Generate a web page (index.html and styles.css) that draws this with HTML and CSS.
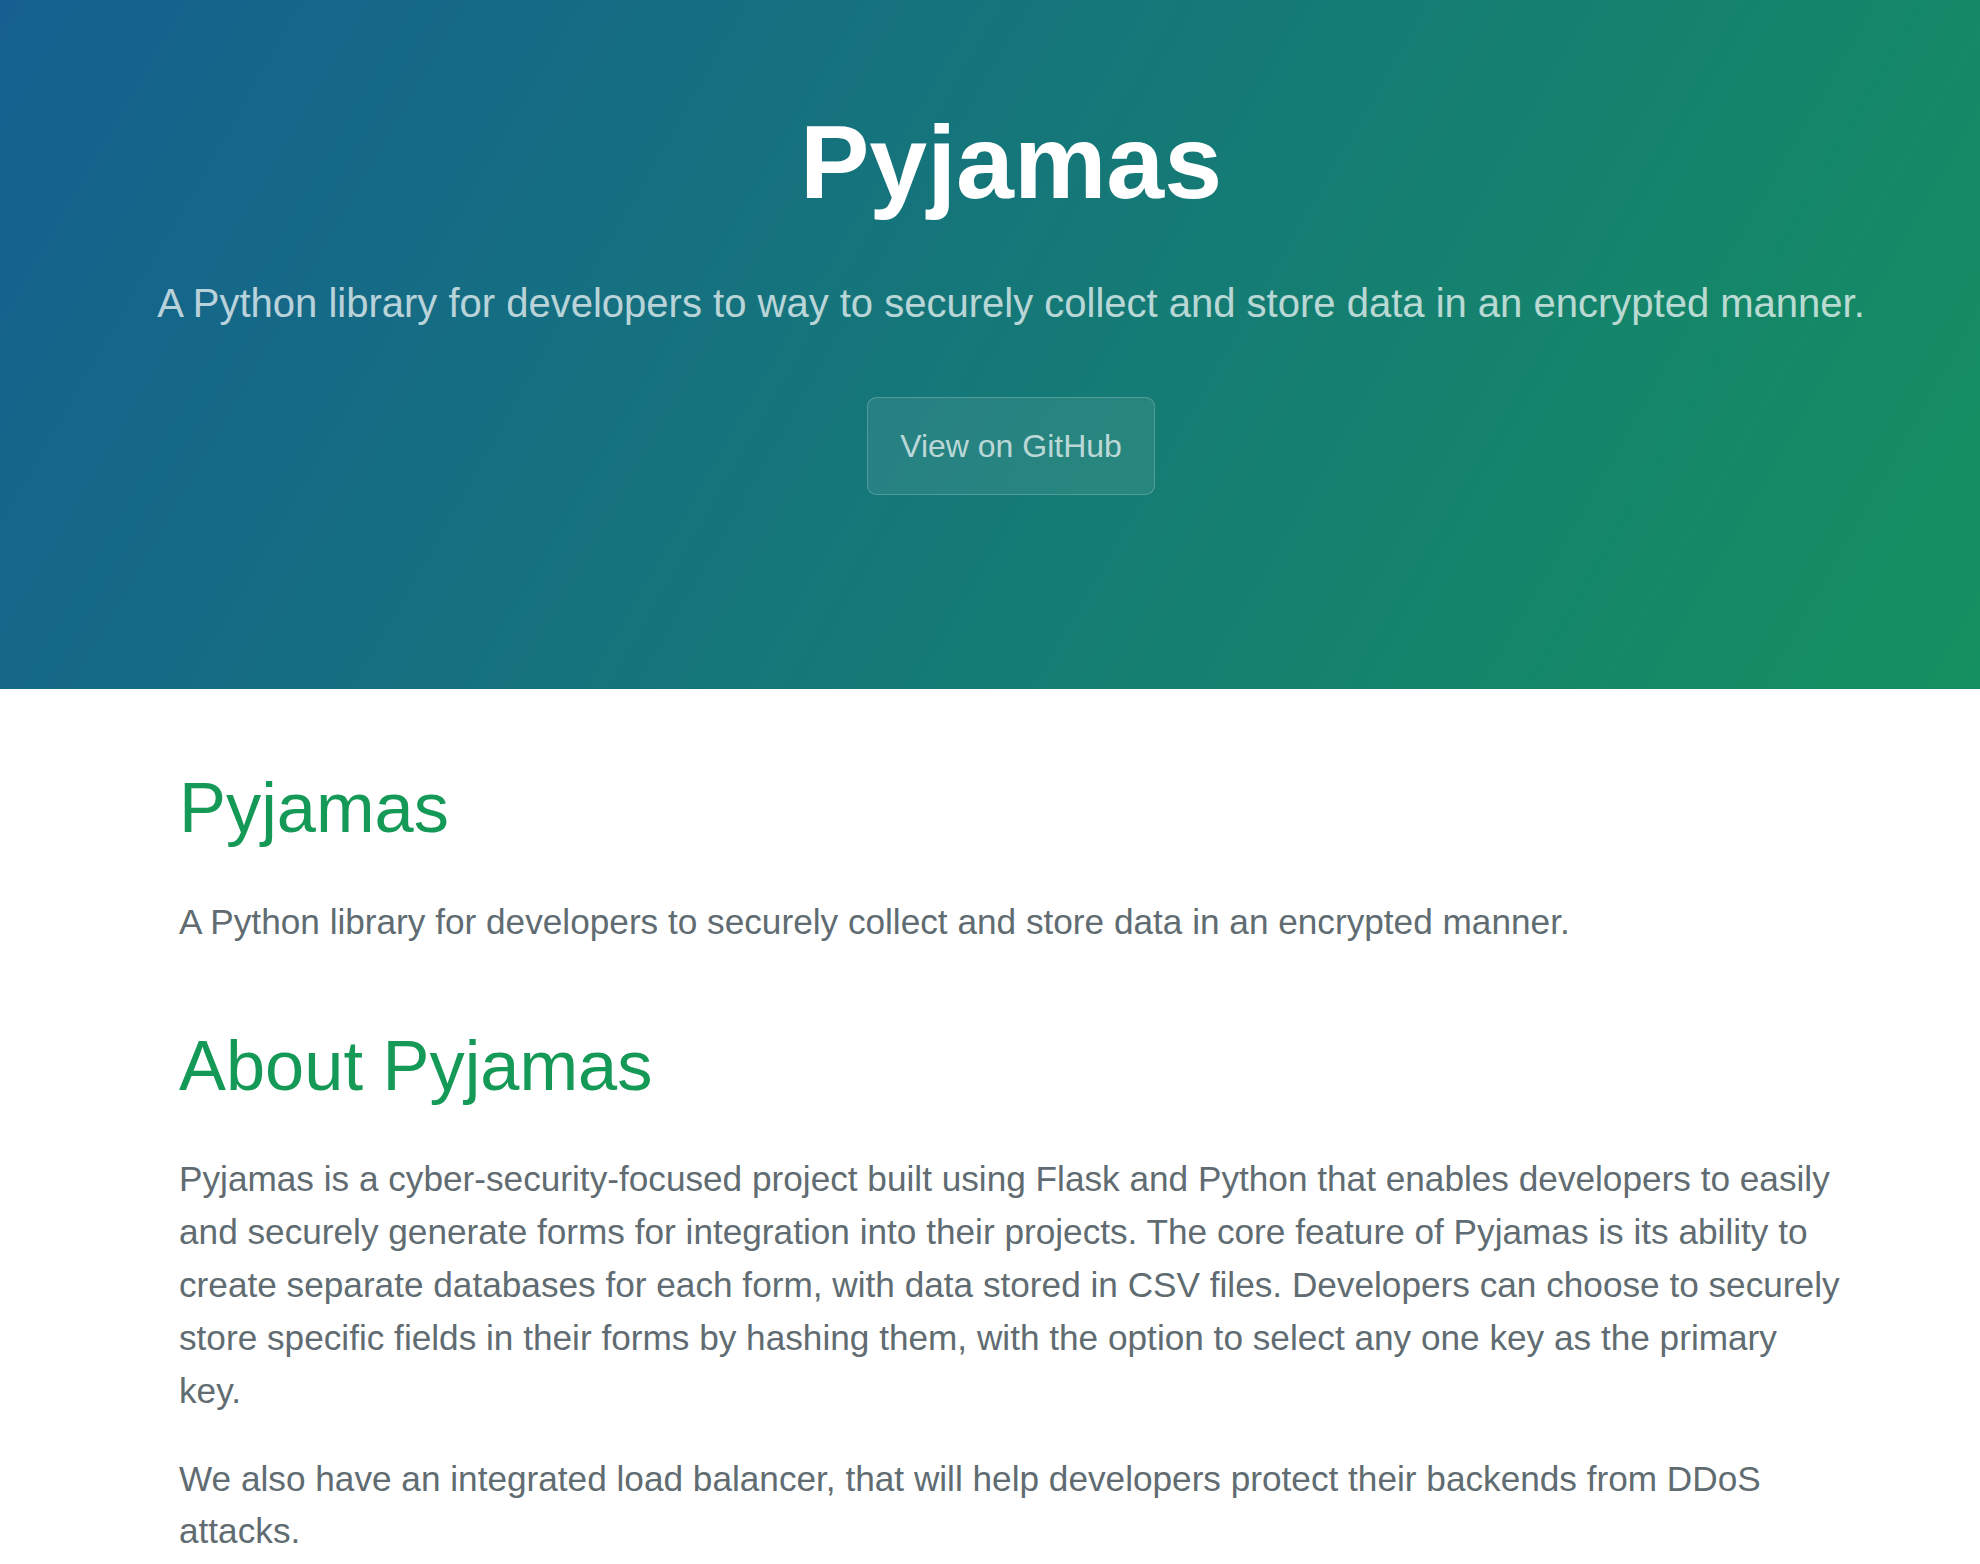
FILE: index.html
```html
<!DOCTYPE html>
<html lang="en">
<head>
<meta charset="utf-8">
<title>Pyjamas</title>
<link rel="stylesheet" href="styles.css">
</head>
<body>
<section class="page-header">
  <h1 class="project-name">Pyjamas</h1>
  <h2 class="project-tagline">A Python library for developers to way to securely collect and store data in an encrypted manner.</h2>
  <a class="btn" href="#">View on GitHub</a>
</section>
<section class="main-content">
  <h1 class="section-title">Pyjamas</h1>
  <p class="text">A Python library for developers to securely collect and store data in an encrypted manner.</p>
  <h1 class="section-title">About Pyjamas</h1>
  <p class="text">Pyjamas is a cyber-security-focused project built using Flask and Python that enables developers to easily and securely generate forms for integration into their projects. The core feature of Pyjamas is its ability to create separate databases for each form, with data stored in CSV files. Developers can choose to securely store specific fields in their forms by hashing them, with the option to select any one key as the primary key.</p>
  <p class="text">We also have an integrated load balancer, that will help developers protect their backends from DDoS attacks.</p>
</section>
</body>
</html>
```

FILE: styles.css
```css
html, body {
  margin: 0;
  padding: 0;
}

body {
  font-family: "Liberation Sans", Arial, Helvetica, sans-serif;
  font-size: 32px;
  line-height: 1.5;
  color: #606c71;
  background: #fff;
}

.page-header {
  box-sizing: border-box;
  height: 689px;
  padding: 84px 0 0 42px;
  color: #fff;
  text-align: center;
  background-color: #159957;
  background-image: linear-gradient(120deg, #155799 -18%, #159957 118%);
}

.project-name {
  margin: 0 0 3.2px;
  font-size: 104px;
  font-weight: bold;
  line-height: 1.5;
}

.project-tagline {
  margin: 33.2px 0 64px;
  font-size: 40px;
  font-weight: normal;
  line-height: 1.5;
  opacity: 0.7;
  white-space: nowrap;
}

.btn {
  display: inline-block;
  padding: 24px 32px;
  font-size: 32px;
  line-height: 1.5;
  color: rgba(255, 255, 255, 0.7);
  text-decoration: none;
  background-color: rgba(255, 255, 255, 0.08);
  border: 1px solid rgba(255, 255, 255, 0.2);
  border-radius: 9.6px;
}

.main-content {
  padding: 66px 136px 64px 179px;
  font-size: 35.2px;
  line-height: 1.5;
  word-wrap: break-word;
}

.section-title {
  margin: 64px 0 35.2px;
  font-size: 70.4px;
  font-weight: normal;
  line-height: 1.5;
  color: #159957;
}

.section-title:first-child {
  margin-top: 0;
}

.text {
  margin: 0 0 35.2px;
}
```
